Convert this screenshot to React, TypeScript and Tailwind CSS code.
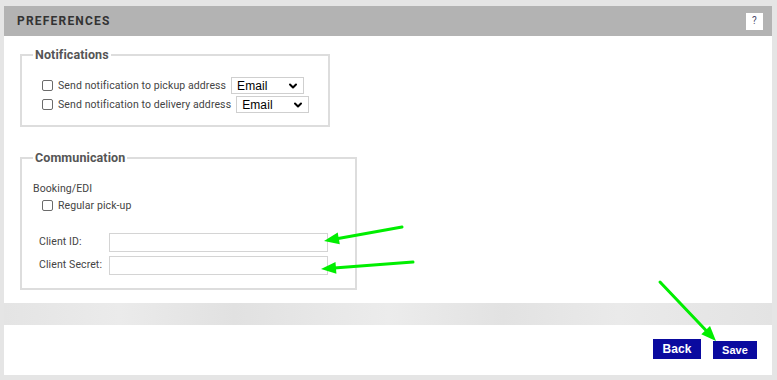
import { ChevronDown } from 'lucide-react';

type Pt = [number, number];

function Arrow({ from, to }: { from: Pt; to: Pt }) {
  const [x1, y1] = from;
  const [x2, y2] = to;
  const dx = x2 - x1;
  const dy = y2 - y1;
  const len = Math.hypot(dx, dy);
  const ux = dx / len;
  const uy = dy / len;
  const head = 15;
  const half = 6;
  const bx = x2 - ux * head;
  const by = y2 - uy * head;
  const pts = `${x2},${y2} ${bx - uy * half},${by + ux * half} ${bx + uy * half},${by - ux * half}`;
  return (
    <g>
      <line x1={x1} y1={y1} x2={bx + ux * 2} y2={by + uy * 2} stroke="#00ee00" strokeWidth={3} strokeLinecap="round" />
      <polygon points={pts} fill="#00ee00" />
    </g>
  );
}

function Checkbox() {
  return <span className="inline-block w-[11px] h-[11px] shrink-0 rounded-[2px] border border-[#6b6b6b] bg-white" />;
}

function Select({ className = '' }: { className?: string }) {
  return (
    <div className={`flex h-[17px] w-[73px] items-center justify-between border border-[#cfcfcf] bg-white pl-[5px] pr-[4px] ${className}`}>
      <span className="font-['Liberation_Sans',Arial,sans-serif] text-[12px] leading-none text-black">Email</span>
      <ChevronDown className="h-[12px] w-[12px] text-black" strokeWidth={4} />
    </div>
  );
}

function Fieldset({ title, className, children }: { title: string; className: string; children: React.ReactNode }) {
  return (
    <fieldset className={`border-2 border-[#dddddd] px-0 ${className}`}>
      <legend className="ml-[11px] px-[2px] text-[12.5px] font-bold leading-[15px] text-[#555]">{title}</legend>
      {children}
    </fieldset>
  );
}

export default function App() {
  return (
    <div className="relative h-[380px] w-[777px] overflow-hidden bg-[#e5e5e5] pl-[4px] pr-[5px] pt-[6px] font-['Roboto',Arial,sans-serif] text-[10.5px] tracking-[0.1px] text-[#444]">
      <div className="w-[768px]">
        {/* Header */}
        <div className="flex h-[30px] items-center justify-between bg-[#b3b3b3] pl-[13px] pr-[9px]">
          <h2 className="text-[12px] font-bold tracking-[1.2px] text-[#333]">PREFERENCES</h2>
          <span className="flex h-[17px] w-[17px] items-center justify-center bg-white text-[10px] leading-none text-[#4a4a6a]">?</span>
        </div>

        {/* Body */}
        <div className="h-[267px] bg-white pl-[16px] pt-[11px]">
          <Fieldset title="Notifications" className="w-[310px] pb-[12px] pt-[15px]">
            <div className="flex flex-col gap-[2px] pl-[20px]">
              <div className="flex items-center">
                <Checkbox />
                <span className="ml-[5px]">Send notification to pickup address</span>
                <Select className="ml-[5px]" />
              </div>
              <div className="flex items-center">
                <Checkbox />
                <span className="ml-[5px]">Send notification to delivery address</span>
                <Select className="ml-[5px]" />
              </div>
            </div>
          </Fieldset>

          <Fieldset title="Communication" className="mt-[23px] w-[337px] pb-[13px] pt-[17px]">
            <div className="pl-[11px] leading-[13px]">Booking/EDI</div>
            <div className="mt-[3px] flex items-center pl-[20px]">
              <Checkbox />
              <span className="ml-[5px]">Regular pick-up</span>
            </div>
            <div className="mt-[19px] flex flex-col gap-[4px] pl-[17px]">
              <div className="flex items-center">
                <span className="w-[70px]">Client ID:</span>
                <div className="h-[19px] w-[219px] border border-[#d4d4d4] bg-white" />
              </div>
              <div className="flex items-center">
                <span className="w-[70px]">Client Secret:</span>
                <div className="h-[19px] w-[219px] border border-[#d4d4d4] bg-white" />
              </div>
            </div>
          </Fieldset>
        </div>

        {/* Strip */}
        <div className="h-[22px] bg-[linear-gradient(90deg,#e4e4e4_0%,#ebebeb_15%,#e1e1e1_30%,#ececec_50%,#e2e2e2_65%,#eaeaea_80%,#e3e3e3_100%)]" />

        {/* Footer */}
        <div className="flex h-[50px] items-start justify-end gap-[12px] bg-white pr-[15px] pt-[14px]">
          <button className="h-[20px] w-[48px] bg-[#0a0a9f] font-['Liberation_Sans',Arial,sans-serif] text-[12px] font-bold text-white">Back</button>
          <button className="mt-[2px] h-[18px] w-[44px] bg-[#0a0a9f] font-['Liberation_Sans',Arial,sans-serif] text-[11px] font-bold text-white">Save</button>
        </div>
      </div>

      <svg className="pointer-events-none absolute left-0 top-0" width={777} height={380}>
        <Arrow from={[402, 227]} to={[324, 241]} />
        <Arrow from={[413, 262]} to={[321, 269]} />
        <Arrow from={[660, 282]} to={[716, 341]} />
      </svg>
    </div>
  );
}
